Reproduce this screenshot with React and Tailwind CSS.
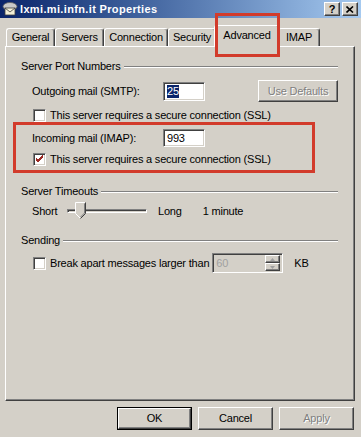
import React from 'react';

const raised = 'border border-t-white border-l-white border-r-[#404040] border-b-[#404040] shadow-[inset_-1px_-1px_0_#808080]';
const sunken = 'border border-t-[#808080] border-l-[#808080] border-r-white border-b-white shadow-[inset_1px_1px_0_#404040,inset_-1px_-1px_0_#d4d0c8]';

function Checkbox({ checked }) {
  return (
    <div className={`w-[13px] h-[13px] bg-white shrink-0 flex items-center justify-center ${sunken}`}>
      {checked && (
        <svg width="9" height="9" viewBox="0 0 9 9">
          <path d="M1 4 L3 6 L8 1 M1 5 L3 7 L8 2 M1 3 L3 5 L8 0" stroke="#9c2a24" strokeWidth="1" fill="none" />
        </svg>
      )}
    </div>
  );
}

function Tab({ label, width, selected }) {
  if (selected) {
    return (
      <div
        className={`relative z-10 -mx-[2px] -mb-[1px] h-[22px] bg-[#d4d0c8] flex items-start justify-center pt-[3px] rounded-t-[3px] border-t border-l border-r border-t-white border-l-white border-r-[#404040] shadow-[inset_-1px_0_0_#808080]`}
        style={{ width }}
      >
        {label}
      </div>
    );
  }
  return (
    <div
      className="h-[18px] flex items-center justify-center rounded-t-[3px] border-t border-l border-r border-t-white border-l-white border-r-[#404040] shadow-[inset_-1px_0_0_#808080]"
      style={{ width }}
    >
      {label}
    </div>
  );
}

function GroupLabel({ children }) {
  return (
    <div className="flex items-center h-[13px] pl-[15px] pr-[16px]">
      <span className="pr-[3px]">{children}</span>
      <div className="flex-1 h-[2px] border-t border-t-[#808080] border-b border-b-white" />
    </div>
  );
}

export default function App() {
  return (
    <div
      className="relative w-[361px] h-[437px] bg-[#d4d0c8] text-[11px] leading-[13px] tracking-[-0.2px] text-black overflow-hidden flex flex-col"
      style={{ fontFamily: '"Liberation Sans", Arial, sans-serif' }}
    >
      {/* Title bar */}
      <div className="h-[18px] shrink-0 flex items-center bg-gradient-to-r from-[#0a246a] to-[#a6caf0] pl-[2px] pr-[3px]">
        <svg width="16" height="14" viewBox="0 0 16 14" className="shrink-0">
          <ellipse cx="8" cy="4.5" rx="7" ry="4" fill="#c8c8c8" stroke="#606060" strokeWidth="0.8" />
          <rect x="3" y="6" width="10" height="7" fill="#f4f0d8" stroke="#404040" strokeWidth="0.8" />
          <path d="M3 6 L8 10 L13 6" stroke="#404040" strokeWidth="0.8" fill="none" />
        </svg>
        <span className="ml-[2px] text-white font-bold tracking-[0.35px]">lxmi.mi.infn.it Properties</span>
        <div className="flex-1" />
        <div className={`w-[16px] h-[14px] bg-[#d4d0c8] flex items-center justify-center font-bold text-[11px] ${raised}`}>?</div>
        <div className={`ml-[2px] w-[16px] h-[14px] bg-[#d4d0c8] flex items-center justify-center ${raised}`}>
          <svg width="8" height="7" viewBox="0 0 8 7">
            <path d="M0.5 0.5 L7 6.5 M7 0.5 L0.5 6.5" stroke="black" strokeWidth="1.6" />
          </svg>
        </div>
      </div>

      {/* Tabs */}
      <div className="h-[28px] shrink-0 flex items-end pl-[6px]">
        <Tab label="General" width={49} />
        <Tab label="Servers" width={49} />
        <Tab label="Connection" width={64} />
        <Tab label="Security" width={48} />
        <Tab label="Advanced" width={66} selected />
        <Tab label="IMAP" width={42} />
      </div>

      {/* Panel */}
      <div className="ml-[5px] w-[350px] h-[355px] shrink-0 flex flex-col border border-t-white border-l-white border-r-[#404040] border-b-[#404040] shadow-[inset_-1px_-1px_0_#808080]">
        <div className="h-[13px]" />
        <GroupLabel>Server Port Numbers</GroupLabel>

        <div className="mt-[7px] h-[22px] flex items-center pl-[26px]">
          <span className="w-[131px]">Outgoing mail (SMTP):</span>
          <div className={`w-[42px] h-[19px] bg-white flex items-center pl-[3px] ${sunken}`}>
            <span className="bg-[#0a246a] text-white">25</span>
          </div>
          <div className={`ml-[53px] w-[80px] h-[22px] flex items-center justify-center text-[#808080] [text-shadow:1px_1px_0_#fff] ${raised}`}>
            Use Defaults
          </div>
        </div>

        <div className="mt-[7px] h-[13px] flex items-center pl-[27px] gap-[4px]">
          <Checkbox />
          <span>This server requires a secure connection (SSL)</span>
        </div>

        <div className="mt-[7px] h-[18px] flex items-center pl-[26px]">
          <span className="w-[131px]">Incoming mail (IMAP):</span>
          <div className={`w-[42px] h-[18px] bg-white flex items-center pl-[3px] ${sunken}`}>993</div>
        </div>

        <div className="mt-[6px] h-[13px] flex items-center pl-[27px] gap-[4px]">
          <Checkbox checked />
          <span>This server requires a secure connection (SSL)</span>
        </div>

        <div className="h-[19px]" />
        <GroupLabel>Server Timeouts</GroupLabel>

        <div className="mt-[3px] h-[20px] flex items-center pl-[26px]">
          <span className="w-[35px]">Short</span>
          <div className="relative w-[80px] h-[20px] flex items-center">
            <div className="w-full h-[4px] border border-t-[#808080] border-l-[#808080] border-r-white border-b-white shadow-[inset_1px_1px_0_#404040]" />
            <svg width="11" height="17" viewBox="0 0 11 17" className="absolute left-[8px] top-[1px]">
              <path d="M0.5 0.5 H10.5 V11.5 L5.5 16.5 L0.5 11.5 Z" fill="#d4d0c8" />
              <path d="M0.5 11.5 V0.5 H10" stroke="white" fill="none" />
              <path d="M10.5 0.5 V11.5 L5.5 16.5" stroke="#404040" fill="none" />
              <path d="M9.5 1.5 V11 L5.5 15" stroke="#808080" fill="none" />
              <path d="M0.5 11.5 L5 16" stroke="white" fill="none" />
            </svg>
          </div>
          <span className="ml-[11px]">Long</span>
          <span className="ml-[21px]">1 minute</span>
        </div>

        <div className="h-[13px]" />
        <GroupLabel>Sending</GroupLabel>

        <div className="mt-[6px] h-[20px] flex items-center pl-[27px]">
          <Checkbox />
          <span className="ml-[4px]">Break apart messages larger than</span>
          <div className={`ml-[3px] w-[71px] h-[20px] bg-[#d4d0c8] flex items-center justify-between pl-[3px] pr-[2px] text-[#a0a0a0] ${sunken}`}>
            <span>60</span>
            <div className="flex flex-col">
              <div className={`w-[15px] h-[8px] flex items-center justify-center ${raised}`}>
                <svg width="5" height="3" viewBox="0 0 5 3"><path d="M2.5 0 L5 3 H0 Z" fill="#a0a0a0" /></svg>
              </div>
              <div className={`w-[15px] h-[8px] flex items-center justify-center ${raised}`}>
                <svg width="5" height="3" viewBox="0 0 5 3"><path d="M0 0 H5 L2.5 3 Z" fill="#a0a0a0" /></svg>
              </div>
            </div>
          </div>
          <span className="ml-[11px]">KB</span>
        </div>
      </div>

      {/* Buttons */}
      <div className="mt-[6px] flex justify-end pr-[7px] gap-[6px]">
        <div className="w-[75px] h-[23px] border border-black">
          <div className={`w-full h-full flex items-center justify-center ${raised}`}>OK</div>
        </div>
        <div className={`w-[75px] h-[23px] flex items-center justify-center ${raised}`}>Cancel</div>
        <div className={`w-[75px] h-[23px] flex items-center justify-center text-[#808080] [text-shadow:1px_1px_0_#fff] ${raised}`}>Apply</div>
      </div>

      {/* Annotations */}
      <div className="absolute left-[215px] top-[13px] w-[65px] h-[44px] border-[3px] border-[#d23b2b] z-20" />
      <div className="absolute left-[13px] top-[122px] w-[302px] h-[51px] border-[3px] border-[#d23b2b] z-20" />
    </div>
  );
}
